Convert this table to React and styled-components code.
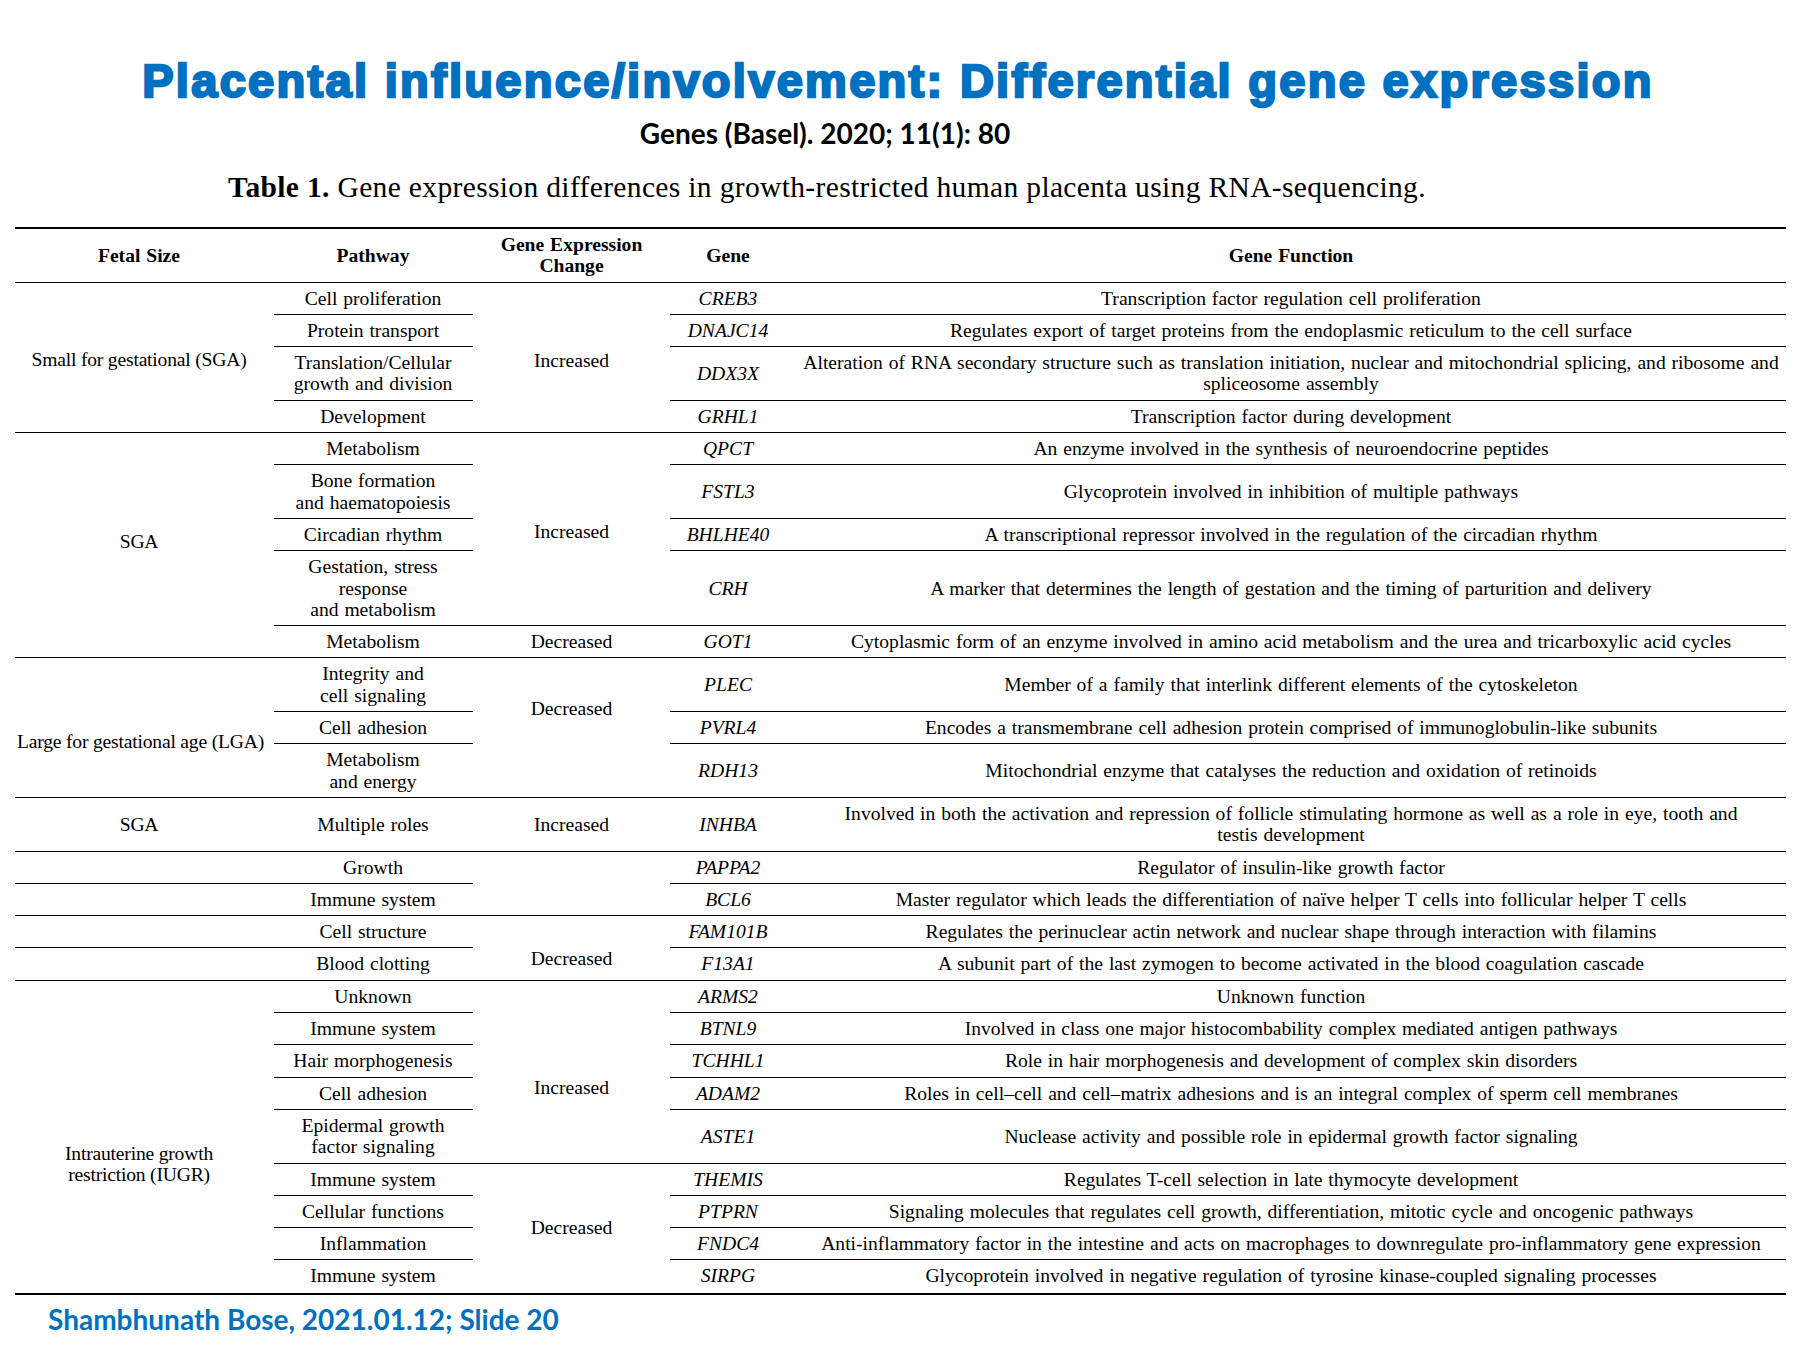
import React from 'react'
import styled, { createGlobalStyle } from 'styled-components'

const GlobalStyle = createGlobalStyle`
    html, body {
        margin: 0;
        padding: 0;
        background: #ffffff;
    }
`

const Slide = styled.div`
    width: 1810px;
    height: 1358px;
    overflow: hidden;
    background: #ffffff;
    display: flex;
    flex-direction: column;
`

const Title = styled.h1`
    margin: 53px 0 0 0;
    padding-right: 14px;
    height: 56px;
    line-height: 56px;
    text-align: center;
    font-family: "Liberation Sans", Arial, sans-serif;
    font-size: 47px;
    font-weight: 700;
    letter-spacing: 2.3px;
    color: #0070c0;
    -webkit-text-stroke: 2.4px #0070c0;
    white-space: nowrap;
`

const Source = styled.div`
    margin-top: 8px;
    padding-right: 160px;
    height: 32px;
    line-height: 32px;
    text-align: center;
    font-family: Lato, "Open Sans", sans-serif;
    font-size: 28px;
    font-weight: 700;
    color: #000000;
`

const Caption = styled.div`
    margin-top: 21px;
    padding-right: 156px;
    height: 34px;
    line-height: 34px;
    text-align: center;
    font-family: "Liberation Serif", "Times New Roman", serif;
    font-size: 29.5px;
    letter-spacing: 0.35px;
    color: #000000;
    white-space: nowrap;

    b {
        font-weight: 700;
    }
`

const TableWrap = styled.div`
    margin-top: 23px;
    padding-left: 15px;
`

const Table = styled.table`
    width: 1771px;
    table-layout: fixed;
    border-collapse: separate;
    border-spacing: 0;
    border-top: 2px solid #000;
    border-bottom: 2px solid #000;
    font-family: "Liberation Serif", "Times New Roman", serif;
    font-size: 19.6px;
    line-height: 21.3px;
    word-spacing: 1px;
    color: #000;
`

const ruleBox = (rule, l, r) => {
    switch (rule) {
        case 'full':
            return { pos: 0, size: '100%' }
        case 'trim':
            return { pos: l, size: `calc(100% - ${l + r}px)` }
        case 'left':
            return { pos: l, size: `calc(100% - ${l}px)` }
        case 'right':
            return { pos: 0, size: `calc(100% - ${r}px)` }
        default:
            return null
    }
}

const Cell = styled.td`
    padding: ${p => 5 + Math.max(0, 2 * (p.$shift || 0))}px 2px ${p => 6 + Math.max(0, -2 * (p.$shift || 0))}px;
    text-align: center;
    vertical-align: middle;
    white-space: nowrap;
    font-style: ${p => (p.$italic ? 'italic' : 'normal')};
    word-spacing: ${p => (p.$tight ? '0' : '1px')};
    letter-spacing: ${p => (p.$tight ? '-0.2px' : 'normal')};
    background-repeat: no-repeat;
    ${p => {
        const box = ruleBox(p.$rule, p.$l || 0, p.$r || 0)
        if (!box) return ''
        return `
            background-image: linear-gradient(#000, #000);
            background-position: ${box.pos}px 100%;
            background-size: ${box.size} 1px;
        `
    }}
`

const HeadCell = styled.th`
    padding: 5px 2px 5px;
    text-align: center;
    vertical-align: middle;
    font-weight: 700;
    white-space: nowrap;
    border-bottom: 1px solid #000;
`

const Footer = styled.div`
    margin-top: 8px;
    padding-left: 48px;
    height: 32px;
    line-height: 32px;
    font-family: Lato, "Open Sans", sans-serif;
    font-size: 28px;
    font-weight: 700;
    color: #0070c0;
`

const lines = (text) => {
    const parts = text.split('\n')
    return parts.map((t, i) => (
        <React.Fragment key={i}>
            {t}
            {i < parts.length - 1 && <br />}
        </React.Fragment>
    ))
}

// fetal / expr are only given on the first row of a block they span
const rows = [
    { fetal: { text: 'Small for gestational (SGA)', span: 4, shift: 2, rule: 'full' }, path: 'Cell proliferation', pr: 'trim', expr: { text: 'Increased', span: 4, shift: 3, rule: 'full' }, gene: 'CREB3', gr: 'trim', fn: 'Transcription factor regulation cell proliferation' },
    { path: 'Protein transport', pr: 'trim', gene: 'DNAJC14', gr: 'trim', fn: 'Regulates export of target proteins from the endoplasmic reticulum to the cell surface' },
    { path: 'Translation/Cellular\ngrowth and division', pr: 'trim', gene: 'DDX3X', gr: 'trim', fn: 'Alteration of RNA secondary structure such as translation initiation, nuclear and mitochondrial splicing, and ribosome and\nspliceosome assembly' },
    { path: 'Development', pr: 'full', gene: 'GRHL1', gr: 'full', fn: 'Transcription factor during development' },
    { fetal: { text: 'SGA', span: 5, shift: -4, rule: 'full' }, path: 'Metabolism', pr: 'trim', expr: { text: 'Increased', span: 4, shift: 3, rule: 'full' }, gene: 'QPCT', gr: 'trim', fn: 'An enzyme involved in the synthesis of neuroendocrine peptides' },
    { path: 'Bone formation\nand haematopoiesis', pr: 'trim', gene: 'FSTL3', gr: 'trim', fn: 'Glycoprotein involved in inhibition of multiple pathways' },
    { path: 'Circadian rhythm', pr: 'trim', gene: 'BHLHE40', gr: 'trim', fn: 'A transcriptional repressor involved in the regulation of the circadian rhythm' },
    { path: 'Gestation, stress\nresponse\nand metabolism', pr: 'left', gene: 'CRH', gr: 'full', fn: 'A marker that determines the length of gestation and the timing of parturition and delivery' },
    { path: 'Metabolism', pr: 'full', expr: { text: 'Decreased', span: 1, rule: 'full' }, gene: 'GOT1', gr: 'full', fn: 'Cytoplasmic form of an enzyme involved in amino acid metabolism and the urea and tricarboxylic acid cycles' },
    { fetal: { text: 'Large for gestational age (LGA)', span: 3, shift: 14, rule: 'full' }, path: 'Integrity and\ncell signaling', pr: 'trim', expr: { text: 'Decreased', span: 3, shift: -19, rule: 'full' }, gene: 'PLEC', gr: 'trim', fn: 'Member of a family that interlink different elements of the cytoskeleton' },
    { path: 'Cell adhesion', pr: 'trim', gene: 'PVRL4', gr: 'trim', fn: 'Encodes a transmembrane cell adhesion protein comprised of immunoglobulin-like subunits' },
    { path: 'Metabolism\nand energy', pr: 'full', gene: 'RDH13', gr: 'full', fn: 'Mitochondrial enzyme that catalyses the reduction and oxidation of retinoids' },
    { fetal: { text: 'SGA', span: 1, rule: 'full' }, path: 'Multiple roles', pr: 'full', expr: { text: 'Increased', span: 1, rule: 'full' }, gene: 'INHBA', gr: 'full', fn: 'Involved in both the activation and repression of follicle stimulating hormone as well as a role in eye, tooth and\ntestis development' },
    { fetal: { text: '', span: 1, rule: 'full' }, path: 'Growth', pr: 'right', expr: { text: '', span: 2, rule: 'full' }, gene: 'PAPPA2', gr: 'trim', fn: 'Regulator of insulin-like growth factor' },
    { fetal: { text: '', span: 1, rule: 'full' }, path: 'Immune system', pr: 'full', gene: 'BCL6', gr: 'full', fn: 'Master regulator which leads the differentiation of na\u00efve helper T cells into follicular helper T cells' },
    { fetal: { text: '', span: 1, rule: 'full' }, path: 'Cell structure', pr: 'right', expr: { text: 'Decreased', span: 2, shift: 11, rule: 'full' }, gene: 'FAM101B', gr: 'trim', fn: 'Regulates the perinuclear actin network and nuclear shape through interaction with filamins' },
    { fetal: { text: '', span: 1, rule: 'full' }, path: 'Blood clotting', pr: 'full', gene: 'F13A1', gr: 'full', fn: 'A subunit part of the last zymogen to become activated in the blood coagulation cascade' },
    { fetal: { text: 'Intrauterine growth\nrestriction (IUGR)', span: 9, shift: 28, rule: 'none' }, path: 'Unknown', pr: 'trim', expr: { text: 'Increased', span: 5, shift: 16, rule: 'full' }, gene: 'ARMS2', gr: 'trim', fn: 'Unknown function' },
    { path: 'Immune system', pr: 'trim', gene: 'BTNL9', gr: 'trim', fn: 'Involved in class one major histocombability complex mediated antigen pathways' },
    { path: 'Hair morphogenesis', pr: 'trim', gene: 'TCHHL1', gr: 'trim', fn: 'Role in hair morphogenesis and development of complex skin disorders' },
    { path: 'Cell adhesion', pr: 'trim', gene: 'ADAM2', gr: 'trim', fn: 'Roles in cell\u2013cell and cell\u2013matrix adhesions and is an integral complex of sperm cell membranes' },
    { path: 'Epidermal growth\nfactor signaling', pr: 'left', gene: 'ASTE1', gr: 'full', fn: 'Nuclease activity and possible role in epidermal growth factor signaling' },
    { path: 'Immune system', pr: 'trim', expr: { text: 'Decreased', span: 4, rule: 'none' }, gene: 'THEMIS', gr: 'trim', fn: 'Regulates T-cell selection in late thymocyte development' },
    { path: 'Cellular functions', pr: 'trim', gene: 'PTPRN', gr: 'trim', fn: 'Signaling molecules that regulates cell growth, differentiation, mitotic cycle and oncogenic pathways' },
    { path: 'Inflammation', pr: 'trim', gene: 'FNDC4', gr: 'trim', fn: 'Anti-inflammatory factor in the intestine and acts on macrophages to downregulate pro-inflammatory gene expression' },
    { path: 'Immune system', pr: 'none', gene: 'SIRPG', gr: 'none', fn: 'Glycoprotein involved in negative regulation of tyrosine kinase-coupled signaling processes', last: true },
]

const GeneTable = () => (
    <Table>
        <colgroup>
            <col style={{ width: 248 }} />
            <col style={{ width: 220 }} />
            <col style={{ width: 177 }} />
            <col style={{ width: 136 }} />
            <col style={{ width: 990 }} />
        </colgroup>
        <thead>
            <tr>
                <HeadCell>Fetal Size</HeadCell>
                <HeadCell>Pathway</HeadCell>
                <HeadCell>Gene Expression<br />Change</HeadCell>
                <HeadCell>Gene</HeadCell>
                <HeadCell>Gene Function</HeadCell>
            </tr>
        </thead>
        <tbody>
            {rows.map((row, i) => (
                <tr key={i}>
                    {row.fetal && (
                        <Cell $tight rowSpan={row.fetal.span} $shift={row.fetal.shift} $rule={row.fetal.rule}>
                            {lines(row.fetal.text)}
                        </Cell>
                    )}
                    <Cell $rule={row.pr} $l={11} $r={10}>{lines(row.path)}</Cell>
                    {row.expr && (
                        <Cell rowSpan={row.expr.span} $shift={row.expr.shift} $rule={row.expr.rule}>
                            {row.expr.text}
                        </Cell>
                    )}
                    <Cell $italic $rule={row.gr} $l={10} $r={0}>{row.gene}</Cell>
                    <Cell $rule={row.last ? 'none' : 'full'}>{lines(row.fn)}</Cell>
                </tr>
            ))}
        </tbody>
    </Table>
)

const App = () => (
    <Slide>
        <GlobalStyle />
        <Title>Placental influence/involvement: Differential gene expression</Title>
        <Source>Genes (Basel). 2020; 11(1): 80</Source>
        <Caption><b>Table 1.</b> Gene expression differences in growth-restricted human placenta using RNA-sequencing.</Caption>
        <TableWrap>
            <GeneTable />
        </TableWrap>
        <Footer>Shambhunath Bose, 2021.01.12; Slide 20</Footer>
    </Slide>
)

export default App
